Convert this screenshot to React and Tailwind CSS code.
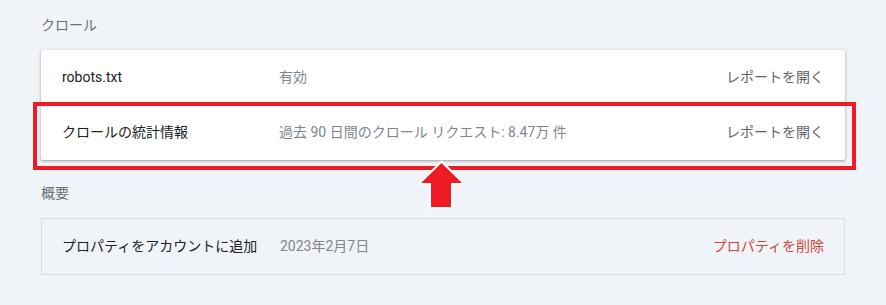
export default function App() {
  const font = { fontFamily: 'Roboto, "Noto Sans CJK JP", sans-serif' };

  return (
    <div className="min-h-[305px] w-full bg-[#f0f3f8] px-[41px] pt-[15px] pb-[29px]" style={font}>
      <h2 className="h-5 text-[14px] leading-5 text-[#6b6f74]">クロール</h2>

      <div className="mt-[15px] rounded-[2px] bg-white shadow-[0_1px_2px_rgba(60,64,67,0.3),0_1px_3px_1px_rgba(60,64,67,0.15)]">
        <div className="flex h-[55px] items-center px-[21px] text-[14px]">
          <div className="w-[217px] text-[#202124]">robots.txt</div>
          <div className="flex-1 text-[#80868b]">有効</div>
          <a className="text-[#5f6368]">レポートを開く</a>
        </div>

        <div className="relative flex h-[55px] items-center px-[21px] text-[14px]">
          <div className="w-[217px] text-[#202124]">クロールの統計情報</div>
          <div className="flex-1 text-[#80868b]">過去 90 日間のクロール リクエスト: 8.47万 件</div>
          <a className="text-[#5f6368]">レポートを開く</a>

          {/* red highlight box */}
          <div className="pointer-events-none absolute -top-[3px] -left-[8px] -right-[11px] -bottom-[10px] border-4 border-[#ed1c24]" />

          {/* arrow pointing up */}
          <svg
            className="pointer-events-none absolute left-[374px] top-[54px]"
            width="53"
            height="53"
            viewBox="0 0 53 53"
          >
            <polygon
              points="26.5,4 47,24 36,24 36,48 16,48 16,24 6,24"
              fill="#ed1c24"
              stroke="#ffffff"
              strokeWidth="4"
              strokeLinejoin="miter"
              paintOrder="stroke"
            />
          </svg>
        </div>
      </div>

      <h2 className="mt-[23px] h-5 text-[14px] leading-5 text-[#6b6f74]">概要</h2>

      <div className="mt-[15px] flex h-[57px] items-center border border-[#dadce0] px-[20px] text-[14px]">
        <div className="w-[218px] text-[#202124]">プロパティをアカウントに追加</div>
        <div className="flex-1 text-[#80868b]">2023年2月7日</div>
        <a className="text-[#d0473d]">プロパティを削除</a>
      </div>
    </div>
  );
}
